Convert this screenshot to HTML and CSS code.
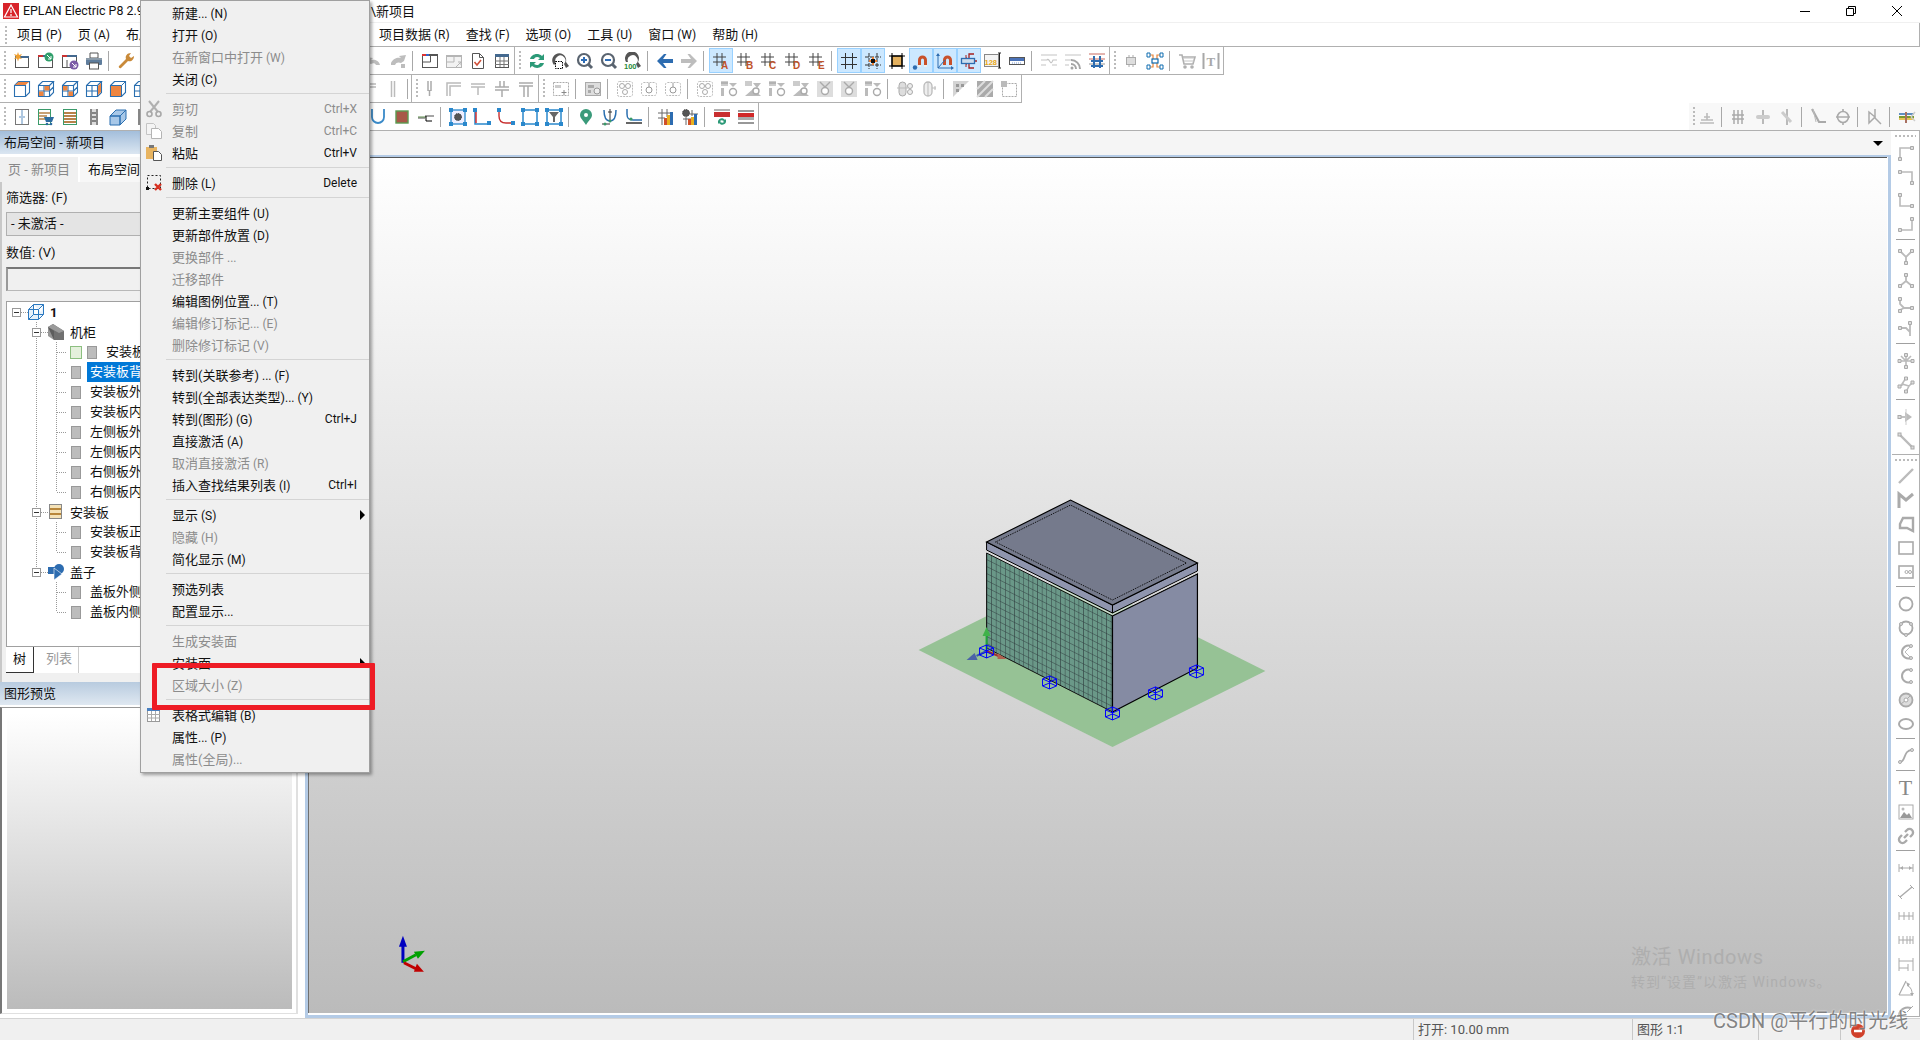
FILE: index.html
```html
<!DOCTYPE html>
<html lang="zh-CN">
<head>
    <meta charset="UTF-8">
    <title>EPLAN Electric P8 2.9</title>
    <link rel="stylesheet" href="styles.css">
</head>
<body>
<svg class="defs" width="0" height="0">
    <defs>
        <!-- main toolbar -->
        <symbol id="i-new" viewBox="0 0 18 18"><rect x="2.500" y="4.500" width="13" height="11" fill="#fff" stroke="#555"/><path d="M2 4h14v2H2z" fill="#44698f"/><path d="M5 0l1 3 3-1-2 3 2 2-3-.5-1 3-1-3-3 .5 2-2-2-3 3 1z" fill="#f0a030"/></symbol>
        <symbol id="i-open" viewBox="0 0 18 18"><rect x="1.500" y="3.500" width="14" height="12" fill="#fff" stroke="#555"/><path d="M1 3h5v2H1z" fill="#c33"/><path d="M6 3h10v2H6z" fill="#44698f"/><path d="M9 8V3" stroke="#555"/><circle cx="12" cy="5" r="4.500" fill="#2f9e6a"/><path d="M10 3l4 4m0-3v3h-3" stroke="#fff" fill="none"/></symbol>
        <symbol id="i-link" viewBox="0 0 18 18"><rect x="1.500" y="3.500" width="14" height="12" fill="#fff" stroke="#555"/><path d="M1 3h5v2H1z" fill="#c33"/><path d="M6 3h10v2H6z" fill="#44698f"/><path d="M6 8v7" stroke="#555"/><circle cx="13" cy="13" r="4.500" fill="#7b5aa6"/><path d="M11 11l4 4m0-3v3h-3" stroke="#fff" fill="none"/></symbol>
        <symbol id="i-print" viewBox="0 0 18 18"><path d="M5 1h8v5H5z" fill="#fff" stroke="#555"/><rect x="1" y="6" width="16" height="7" rx="1" fill="#5f7d9c"/><path d="M1 6h16v2H1z" fill="#8a9aa8"/><rect x="4.500" y="11" width="9" height="6" fill="#fff" stroke="#555"/></symbol>
        <symbol id="i-wrench" viewBox="0 0 18 18"><path d="M2 14l7-7c-1-3 1-6 5-6l-2 3 2 2 3-2c0 4-3 6-6 5l-7 7c-1 1-3-1-2-2z" fill="#c98a3a"/></symbol>
        <symbol id="i-undo" viewBox="0 0 18 18"><path d="M3 11l-2-6 7 1-2 2c3-1 8 0 9 5h-4c-1-2-3-2-5-1z" fill="#bdbdbd"/></symbol>
        <symbol id="i-redo" viewBox="0 0 18 18"><path d="M15 9l2-6-7 1 2 2c-3-1-8 0-10 5v2h4c1-3 4-3 6-2z" fill="#bdbdbd"/><rect x="12" y="12" width="4" height="4" fill="#bdbdbd"/></symbol>
        <symbol id="i-layout" viewBox="0 0 18 18"><rect x="1.500" y="2.500" width="15" height="13" fill="#fff" stroke="#555"/><path d="M1 2h15v2H1z" fill="#555"/><path d="M1 2h4v2H1z" fill="#d33"/><path d="M5 2h3v2H5z" fill="#36c"/><path d="M9.500 4v6h-8" fill="none" stroke="#555"/></symbol>
        <symbol id="i-layout-g" viewBox="0 0 18 18"><rect x="1.500" y="3.500" width="15" height="12" fill="#f2f2f2" stroke="#b5b5b5"/><path d="M1 3h16v2H1z" fill="#b5b5b5"/><path d="M9 5v5H2m9 5l5-5m-3 0h3v3" fill="none" stroke="#b5b5b5"/></symbol>
        <symbol id="i-check" viewBox="0 0 18 18"><path d="M3.500 1.500h7l4 4v11h-11z" fill="#fff" stroke="#555"/><path d="M10.500 1.500v4h4" fill="none" stroke="#555"/><path d="M5.500 10l2.500 3 4-5" fill="none" stroke="#d0503a" stroke-width="1.600"/></symbol>
        <symbol id="i-table" viewBox="0 0 18 18"><rect x="2.500" y="2.500" width="13" height="13" fill="#fff" stroke="#555"/><path d="M2 2h14v3H2z" fill="#44698f"/><path d="M2 9h14M2 12.500h14M7 5v10M11 5v10" stroke="#777"/></symbol>
        <symbol id="i-refresh" viewBox="0 0 18 18"><path d="M2 7c1-4 7-7 12-3l2-2v6h-6l2-2c-3-2-5-1-6 1zM16 11c-1 4-7 7-12 3l-2 2v-6h6l-2 2c3 2 5 1 6-1z" fill="#2c9a78"/></symbol>
        <symbol id="i-zwin" viewBox="0 0 18 18"><path d="M2 13A7 7 0 1 1 14 10l3 4-3 2-2-4A5 5 0 1 0 4 11" fill="#555"/><rect x="3.500" y="9.500" width="7" height="7" fill="#fff" stroke="#000" stroke-dasharray="1.500 1"/></symbol>
        <symbol id="i-zin" viewBox="0 0 18 18"><circle cx="8" cy="8" r="6" fill="#fff" stroke="#5a6470" stroke-width="2.200"/><path d="M12 12l4 4" stroke="#5a6470" stroke-width="3"/><path d="M5 8h6M8 5v6" stroke="#2f6db5" stroke-width="2"/></symbol>
        <symbol id="i-zout" viewBox="0 0 18 18"><circle cx="8" cy="8" r="6" fill="#fff" stroke="#5a6470" stroke-width="2.200"/><path d="M12 12l4 4" stroke="#5a6470" stroke-width="3"/><path d="M5 8h6" stroke="#2f6db5" stroke-width="2"/></symbol>
        <symbol id="i-z100" viewBox="0 0 18 18"><path d="M2 10A7 7 0 1 1 14 10l3 4-3 2-2-4A5 5 0 1 0 4 10" fill="#555"/><text x="0" y="17" font-size="7.500" font-weight="700" fill="#2a8a3a" font-family="Liberation Sans, sans-serif">100</text></symbol>
        <symbol id="i-back" viewBox="0 0 18 18"><path d="M1 9l7-7h2.500L7 7h10v4H7l3.500 5H8z" fill="#2d6cb0"/></symbol>
        <symbol id="i-fwd" viewBox="0 0 18 18"><path d="M17 9l-7-7H7.500L11 7H1v4h10l-3.500 5H10z" fill="#bdbdbd"/></symbol>
        <symbol id="i-hash" viewBox="0 0 18 18"><path d="M5 1v13M10 1v13M1 5h13M1 10h13" stroke="#444" fill="none"/></symbol>
        <symbol id="i-grid" viewBox="0 0 18 18"><path d="M5.500 1v16M12.500 1v16M1 5.500h16M1 12.500h16" stroke="#333" fill="none"/></symbol>
        <symbol id="i-snap" viewBox="0 0 18 18"><path d="M5 1v16M13 1v16M1 5h16M1 13h16" stroke="#333" stroke-dasharray="4 1"/><path d="M5 9h8M9 5v8" stroke="#f08030" stroke-width="2"/><rect x="7" y="7" width="4" height="4" fill="#111"/></symbol>
        <symbol id="i-orsq" viewBox="0 0 18 18"><rect x="4" y="4" width="10" height="10" fill="#e3b05e" stroke="#000" stroke-width="1.200"/><path d="M4 1v16M14 1v16M1 4h16M1 14h16" stroke="#000"/></symbol>
        <symbol id="i-mag" viewBox="0 0 18 18"><path d="M6 15V8a4.500 4.500 0 0 1 9 0v7h-3V8a1.500 1.500 0 0 0-3 0v7z" fill="#c8502a"/><path d="M6 15h3v-2H6zM12 15h3v-2h-3z" fill="#eee"/><circle cx="3" cy="15.500" r="2.200" fill="#2d6cb0"/></symbol>
        <symbol id="i-magax" viewBox="0 0 18 18"><path d="M7 13V8a4.500 4.500 0 0 1 9 0v5h-3V8a1.500 1.500 0 0 0-3 0v5z" fill="#c8502a"/><path d="M2 2v14h15M2 16L9 8" fill="none" stroke="#2d6cb0"/><path d="M0 4l2-3 2 3zM15 14l3 2-3 2z" fill="#2d6cb0"/></symbol>
        <symbol id="i-conn" viewBox="0 0 18 18"><path d="M9 6V2h5M9 12v4h5M3 9H1M15 9h2" fill="none" stroke="#a52020" stroke-width="1.300"/><path d="M7 6h-1v-3M7 12h-1v3" fill="none" stroke="#a52020"/><rect x="1.500" y="6.500" width="13" height="5" fill="#cde" stroke="#2d6cb0" stroke-width="1.300"/></symbol>
        <symbol id="i-128" viewBox="0 0 18 18"><rect x="0.500" y="2.500" width="14" height="12" fill="#f4f4f4" stroke="#888"/><text x="0.500" y="12.500" font-size="7.500" font-weight="700" fill="#e8a818" font-family="Liberation Sans, sans-serif">128</text><path d="M14 1h3M15.500 1v15M14 16h3" stroke="#222"/></symbol>
        <symbol id="i-bar" viewBox="0 0 18 18"><rect x="1.500" y="5.500" width="15" height="7" fill="#fff" stroke="#555"/><rect x="2" y="6" width="14" height="3" fill="#4a72b8"/><path d="M4 11h10" stroke="#7b9bd0" stroke-dasharray="1 1"/></symbol>
        <symbol id="i-gwave" viewBox="0 0 18 18"><path d="M1 3h16M1 8h6c2-3 3 5 5 2l1-2h4M1 13h5M12 13h5" fill="none" stroke="#c4c4c4" stroke-width="1.200"/></symbol>
        <symbol id="i-grss" viewBox="0 0 18 18"><path d="M1 3h16M1 8h7M1 13h4" stroke="#c4c4c4" stroke-width="1.200"/><path d="M7 8a9 9 0 0 1 9 9M7 12a5 5 0 0 1 5 5" fill="none" stroke="#a4a4a4" stroke-width="2"/><circle cx="8" cy="16" r="1.500" fill="#a4a4a4"/></symbol>
        <symbol id="i-gnet" viewBox="0 0 18 18"><path d="M1 2h16M1 7h16" stroke="#c86a60"/><path d="M1 12h16" stroke="#999"/><path d="M6 4v12M12 4v12M3 9h12M3 14h12" stroke="#2d6cb0" stroke-width="2"/></symbol>
        <symbol id="i-chip" viewBox="0 0 18 18"><rect x="4.500" y="5.500" width="9" height="7" fill="#ddd" stroke="#aaa"/><path d="M7 3v2M11 3v2M7 13v2M11 13v2" stroke="#aaa"/></symbol>
        <symbol id="i-cblue" viewBox="0 0 18 18"><path d="M3 3h4v5h4V3h4M3 15h4v-5h4v5h4" fill="none" stroke="#e8853a" stroke-width="1.200"/><path d="M1 1h3v4H1zM14 1h3v4h-3zM1 13h3v4H1zM14 13h3v4h-3z" fill="#fff" stroke="#0f6cb0"/><rect x="6" y="7" width="6" height="4" fill="#fff" stroke="#0f6cb0" stroke-width="1.200"/></symbol>
        <symbol id="i-cart" viewBox="0 0 18 18"><path d="M1 3h3l2 9h9l2-7H5" fill="none" stroke="#b0b0b0" stroke-width="1.600"/><path d="M5 6h11M6 9h10" stroke="#c4c4c4"/><circle cx="7" cy="15" r="1.800" fill="#b0b0b0"/><circle cx="14" cy="15" r="1.800" fill="#b0b0b0"/></symbol>
        <symbol id="i-tbar" viewBox="0 0 18 18"><path d="M1.500 1v16M16.500 1v16" stroke="#a8a8a8" stroke-width="2"/><text x="4.500" y="14" font-size="13" font-weight="700" fill="#a8a8a8" font-family="Liberation Serif, serif">T</text></symbol>
        <!-- second row -->
        <symbol id="i-cube" viewBox="0 0 18 18"><path d="M1.500 5.500h11v11h-11zM1.500 5.500l4-4h11l-4 4M12.500 16.500l4-4v-11M7 6v10M1.500 11h11M12.500 11l4-4" fill="#fff" stroke="#2a6fb0" stroke-width="1.100"/></symbol>
        <symbol id="c-top" viewBox="0 0 18 18"><path d="M1.500 16.500v-11l4-4h11v11l-4 4zM1.500 5.500h11v11" fill="#fff" stroke="#2a6fb0" stroke-width="1.100"/><path d="M2 5l3.500-3H16l-3.500 3z" fill="#ee8540"/></symbol>
        <symbol id="c-back" viewBox="0 0 18 18"><use href="#i-cube"/><path d="M7.500 6h5v4.500h-5z" fill="#ee8540"/><path d="M2 11.500h4.500V16H2z" fill="#ee8540"/></symbol>
        <symbol id="c-left" viewBox="0 0 18 18"><use href="#i-cube"/><path d="M2 6h4.500v4.500H2zM7.500 11.500h4.500V16H7.500z" fill="#ee8540"/></symbol>
        <symbol id="c-right" viewBox="0 0 18 18"><use href="#i-cube"/><path d="M13 6l3-3v9l-3 3z" fill="#ee8540"/></symbol>
        <symbol id="c-front" viewBox="0 0 18 18"><path d="M1.500 5.500l4-4h11v11l-4 4h-11z" fill="#fff" stroke="#2a6fb0" stroke-width="1.100"/><path d="M2 6h10v10H2z" fill="#ee8540"/><path d="M12.500 5.500l4-4M12.500 5.500v11M1.500 5.500h11" stroke="#2a6fb0"/></symbol>
        <symbol id="i-tline" viewBox="0 0 18 18"><path d="M2 4h14M2 7h14M9 7v8" fill="none" stroke="#bbb" stroke-width="1.500"/></symbol>
        <symbol id="i-pipe" viewBox="0 0 18 18"><path d="M7.500 1v16M10.500 1v16" stroke="#bbb" stroke-width="1.500"/></symbol>
        <symbol id="i-pipet" viewBox="0 0 18 18"><path d="M7 1v10M10 1v10M8.500 10v6" fill="none" stroke="#aaa" stroke-width="1.500"/></symbol>
        <symbol id="i-corner" viewBox="0 0 18 18"><path d="M2 16V3h14M5 16V6h11" fill="none" stroke="#bbb" stroke-width="1.500"/></symbol>
        <symbol id="i-cross" viewBox="0 0 18 18"><path d="M2 7h14M2 10h14M7 1v6M11 1v6M9 10v7" fill="none" stroke="#aaa" stroke-width="1.500"/></symbol>
        <symbol id="i-tee" viewBox="0 0 18 18"><path d="M2 3h14M2 6h14M7 6v11M11 6v11" fill="none" stroke="#aaa" stroke-width="1.500"/></symbol>
        <symbol id="i-addbox" viewBox="0 0 18 18"><rect x="1.500" y="2.500" width="15" height="13" fill="none" stroke="#aaa" stroke-dasharray="2 1"/><path d="M3 5h6v3H3z" fill="#ccc"/><path d="M12 10v5M9.500 12.500h5" stroke="#888"/></symbol>
        <symbol id="i-pal" viewBox="0 0 18 18"><rect x="1.500" y="2.500" width="15" height="13" fill="#ddd" stroke="#aaa"/><path d="M4 5h6v3H4zM4 10h3v3H4z" fill="#aaa"/><circle cx="13" cy="11" r="3" fill="#eee" stroke="#999"/></symbol>
        <symbol id="i-nodes" viewBox="0 0 18 18"><rect x="1.500" y="1.500" width="15" height="15" rx="2" fill="none" stroke="#bbb" stroke-dasharray="2 1"/><circle cx="6" cy="6" r="2.500" fill="none" stroke="#aaa"/><circle cx="12" cy="6" r="2.500" fill="none" stroke="#aaa"/><circle cx="9" cy="12" r="2.500" fill="none" stroke="#aaa"/></symbol>
        <symbol id="i-node1" viewBox="0 0 18 18"><rect x="1.500" y="2.500" width="15" height="13" rx="2" fill="none" stroke="#bbb" stroke-dasharray="2 1"/><circle cx="9" cy="10" r="3" fill="none" stroke="#999"/><path d="M9 3v4" stroke="#999"/></symbol>
        <symbol id="i-filt" viewBox="0 0 18 18"><path d="M1 1h7v5H1z" fill="#ccc"/><path d="M1 3h7" stroke="#999"/><path d="M9 3h8l-4 4z" fill="#bbb"/><circle cx="13" cy="12" r="3.500" fill="#fff" stroke="#aaa" stroke-width="1.400"/><path d="M1 8h3v8H1z" fill="#bbb"/></symbol>
        <symbol id="i-hour" viewBox="0 0 18 18"><path d="M1 1h7v5H1z" fill="#ccc"/><path d="M9 3h8l-4 5-4-5z" fill="#bbb"/><path d="M1 16h16l-8-7z" fill="#bbb"/><circle cx="12" cy="11" r="3" fill="#fff" stroke="#aaa" stroke-width="1.400"/></symbol>
        <symbol id="i-tile" viewBox="0 0 18 18"><rect x="1" y="1" width="16" height="16" fill="#ddd"/><path d="M4 2l5 5 5-5" fill="none" stroke="#aaa" stroke-width="1.400"/><circle cx="9" cy="11" r="3.500" fill="#fff" stroke="#aaa" stroke-width="1.400"/></symbol>
        <symbol id="i-ovals" viewBox="0 0 18 18"><rect x="3" y="2" width="7" height="14" rx="3.500" fill="#ddd" stroke="#aaa"/><path d="M1 8h11" stroke="#bbb"/><circle cx="14" cy="6" r="2.500" fill="#eee" stroke="#aaa"/><circle cx="14" cy="12" r="2.500" fill="#eee" stroke="#aaa"/></symbol>
        <symbol id="i-oval" viewBox="0 0 18 18"><rect x="4" y="2" width="8" height="14" rx="4" fill="#eee" stroke="#bbb" stroke-width="1.300"/><path d="M8 2v14M12 8h4M15 6v4" stroke="#bbb"/></symbol>
        <symbol id="i-tri" viewBox="0 0 18 18"><path d="M1 1h16L1 17z" fill="#d4d4d4"/><path d="M4 4h3v3H4zM9 4h3v3H9zM4 9h3v3H4z" fill="#999"/></symbol>
        <symbol id="i-hatch" viewBox="0 0 18 18"><rect x="1" y="1" width="16" height="16" fill="#aaa"/><path d="M1 9l8-8M1 17L17 1M9 17l8-8" stroke="#ddd" stroke-width="2"/></symbol>
        <symbol id="i-dash" viewBox="0 0 18 18"><rect x="2.500" y="3.500" width="14" height="13" fill="none" stroke="#aaa" stroke-dasharray="2 1"/><path d="M1 1h6v6H1z" fill="#bbb"/></symbol>
        <!-- third row -->
        <symbol id="i-door" viewBox="0 0 18 18"><rect x="2.500" y="1.500" width="13" height="15" fill="#fff" stroke="#777"/><path d="M9 2v14M7 8v2M11 8v2" stroke="#5f8fc0"/></symbol>
        <symbol id="i-lcart" viewBox="0 0 18 18"><rect x="1.500" y="1.500" width="12" height="15" fill="#fff" stroke="#3a9a6a"/><path d="M2 5h11M2 8h8M2 11h7" stroke="#b8824a" stroke-width="1.500"/><path d="M7 9h10l-2 5H9z" fill="#2d6ca0"/><circle cx="10" cy="16" r="1.300" fill="#2d6ca0"/><circle cx="14" cy="16" r="1.300" fill="#2d6ca0"/></symbol>
        <symbol id="i-list" viewBox="0 0 18 18"><rect x="2.500" y="1.500" width="13" height="15" fill="#fff" stroke="#3a9a6a"/><path d="M3 5h12M3 8h12M3 11h12M3 14h12" stroke="#b8824a" stroke-width="2"/></symbol>
        <symbol id="i-rail" viewBox="0 0 18 18"><path d="M5 1h8v16H5z" fill="#888"/><path d="M7 1h4v16H7z" fill="#ddd"/><path d="M7 5h4M7 9h4M7 13h4" stroke="#666" stroke-width="1.500"/></symbol>
        <symbol id="i-block" viewBox="0 0 18 18"><path d="M1 8l6-6h10L11 8zM1 8h10v9H1zM11 8l6-6v9l-6 6z" fill="#a8c8e8" stroke="#2a6fb0"/></symbol>
        <symbol id="i-u" viewBox="0 0 18 18"><path d="M3 1v8a6 6 0 0 0 12 0V1" fill="none" stroke="#3a8ac8" stroke-width="1.800"/></symbol>
        <symbol id="i-brsq" viewBox="0 0 18 18"><rect x="3" y="3" width="12" height="12" fill="#a85848" stroke="#5a9a50" stroke-width="1.400"/></symbol>
        <symbol id="i-wire" viewBox="0 0 18 18"><path d="M1 10h7M8 8h9" stroke="#888" stroke-width="1.500"/><path d="M1 9h8" stroke="#5a8a4a"/><path d="M9 8v5h6" fill="none" stroke="#000"/></symbol>
        <symbol id="i-bxgear" viewBox="0 0 18 18"><rect x="2" y="2" width="14" height="14" fill="#eef" stroke="#2a88cc" stroke-width="1.300"/><circle cx="9" cy="9" r="3.500" fill="#555" stroke="#333" stroke-dasharray="1 1"/><path d="M0 0h4v4H0zM14 0h4v4h-4zM0 14h4v4H0zM14 14h4v4h-4z" fill="#2a88cc"/></symbol>
        <symbol id="i-lblue" viewBox="0 0 18 18"><path d="M2 2v14h14" fill="none" stroke="#2a88cc" stroke-width="1.500"/><path d="M3 2v13" stroke="#d03030" stroke-width="1.500"/><path d="M0 0h4v4H0zM14 13h4v4h-4z" fill="#2a88cc"/></symbol>
        <symbol id="i-lred" viewBox="0 0 18 18"><path d="M2 3v5c0 5 3 7 7 7h6" fill="none" stroke="#c83030" stroke-width="1.400"/><path d="M0 0h4v4H0zM14 13h4v4h-4z" fill="#2a88cc"/></symbol>
        <symbol id="i-qblue" viewBox="0 0 18 18"><rect x="2" y="2" width="14" height="14" fill="#fff" stroke="#2a88cc" stroke-width="1.500"/><path d="M0 0h4v4H0zM14 0h4v4h-4zM0 14h4v4H0zM14 14h4v4h-4z" fill="#2a88cc"/></symbol>
        <symbol id="i-qfunnel" viewBox="0 0 18 18"><rect x="2" y="2" width="14" height="14" fill="#fff" stroke="#2a88cc" stroke-width="1.500"/><path d="M4 4h10l-4 5v5H8V9z" fill="#666"/><path d="M0 0h4v4H0zM14 0h4v4h-4zM0 14h4v4H0zM14 14h4v4h-4z" fill="#2a88cc"/></symbol>
        <symbol id="i-pin" viewBox="0 0 18 18"><path d="M9 17C6 12 3 10 3 7a6 6 0 0 1 12 0c0 3-3 5-6 10z" fill="#3a9a7a"/><circle cx="9" cy="7" r="2" fill="#fff"/></symbol>
        <symbol id="i-vnode" viewBox="0 0 18 18"><path d="M3 2c0 7 2 11 6 11s6-4 6-11" fill="none" stroke="#2a6fb0" stroke-width="1.500"/><path d="M9 1v12M7 4h4M1 16h8" stroke="#333"/><circle cx="4" cy="16" r="1.500" fill="#3a9a6a"/><circle cx="9" cy="13" r="1.500" fill="#3a9a6a"/></symbol>
        <symbol id="i-lgreen" viewBox="0 0 18 18"><path d="M2 1v5c0 5 2 6 6 6h9" fill="none" stroke="#2a6fb0" stroke-width="1.500"/><path d="M1 15h16" stroke="#333" stroke-width="1.500"/><circle cx="6" cy="11" r="1.600" fill="#3a9a6a"/></symbol>
        <symbol id="i-gbars" viewBox="0 0 18 18"><path d="M5 1v16M10 1v8M1 5h12M1 10h7" stroke="#666" fill="none"/><path d="M7 10h3v7H7z" fill="#d0502a"/><path d="M10 7h3v10h-3z" fill="#e8b020"/><path d="M13 4h3v13h-3z" fill="#2d6cb0"/></symbol>
        <symbol id="i-gears" viewBox="0 0 18 18"><circle cx="5" cy="5" r="3.500" fill="#555" stroke="#333" stroke-dasharray="1 1"/><path d="M2 11h8M5 9v8M11 2v6M8 6h9" stroke="#666" fill="none"/><path d="M7 11h3v6H7z" fill="#d0502a"/><path d="M10 9h3v8h-3z" fill="#e8b020"/><path d="M13 6h3v11h-3z" fill="#2d6cb0"/></symbol>
        <symbol id="i-rbar2" viewBox="0 0 18 18"><path d="M1 2h16" stroke="#666"/><path d="M1 4h16v5H1z" fill="#c83030"/><path d="M5 13c1-3 5-4 7-1l1-1v3h-3l1-1c-2-1-3-1-4 0zM13 14c-1 3-5 4-7 1l-1 1v-3h3l-1 1c2 1 3 1 4 0z" fill="#2c9a78"/></symbol>
        <symbol id="i-rbar" viewBox="0 0 18 18"><path d="M1 3h16M1 15h16" stroke="#777" stroke-width="1.500"/><path d="M1 5h16v4H1z" fill="#d02828"/><path d="M1 9h16v3H1z" fill="#aaa"/></symbol>
        <!-- third row, right -->
        <symbol id="i-hat" viewBox="0 0 18 18"><path d="M2 15h14M3 12h12M6 9h6M9 5v7" fill="none" stroke="#bbb" stroke-width="1.600"/></symbol>
        <symbol id="i-tri3" viewBox="0 0 18 18"><path d="M4 2v14M8 2v14M12 2v14M2 7h12M2 11h12" stroke="#aaa" stroke-width="1.500"/></symbol>
        <symbol id="i-oring" viewBox="0 0 18 18"><path d="M9 2v14" stroke="#aaa" stroke-width="1.600"/><rect x="2" y="7" width="14" height="4" rx="2" fill="#ccc"/></symbol>
        <symbol id="i-slash" viewBox="0 0 18 18"><path d="M9 1v16" stroke="#aaa" stroke-width="1.600"/><path d="M4 4l9 10" stroke="#ccc" stroke-width="3"/></symbol>
        <symbol id="i-ski" viewBox="0 0 18 18"><path d="M2 1l7 13h7" fill="none" stroke="#aaa" stroke-width="2.200"/><path d="M3 1l3 13" stroke="#bbb"/></symbol>
        <symbol id="i-theta" viewBox="0 0 18 18"><circle cx="9" cy="9" r="5.500" fill="none" stroke="#aaa" stroke-width="1.600"/><path d="M2 9h14M9 1v3M9 14v3" stroke="#aaa" stroke-width="1.600"/></symbol>
        <symbol id="i-kk" viewBox="0 0 18 18"><path d="M3 4v11l6-6zM9 1v9l6 6" fill="none" stroke="#aaa" stroke-width="1.500"/></symbol>
        <symbol id="i-wires" viewBox="0 0 18 18"><path d="M1 6h15" stroke="#2d6cb0" stroke-width="1.500"/><path d="M1 9h15" stroke="#7a9a30" stroke-width="2"/><path d="M1 11h15" stroke="#e0b020" stroke-width="1.500"/><path d="M8 4v11" stroke="#a87060" stroke-width="2"/><path d="M13 9l4-5M13 9l4 4" stroke="#ccc" stroke-width="1.500"/></symbol>
        <!-- side toolbar -->
        <symbol id="v-c1" viewBox="0 0 18 18"><path d="M3 15V4h12" fill="none" stroke="#bbb" stroke-width="1.600"/><path d="M1.500 13.500h3v3h-3zM13.500 2.500h3v3h-3z" fill="#ddd" stroke="#aaa"/></symbol>
        <symbol id="v-c2" viewBox="0 0 18 18"><path d="M3 4h12v11" fill="none" stroke="#bbb" stroke-width="1.600"/><path d="M1.500 2.500h3v3h-3zM13.500 13.500h3v3h-3z" fill="#ddd" stroke="#aaa"/></symbol>
        <symbol id="v-c3" viewBox="0 0 18 18"><path d="M3 3v11h12" fill="none" stroke="#bbb" stroke-width="1.600"/><path d="M1.500 1.500h3v3h-3zM13.500 12.500h3v3h-3z" fill="#ddd" stroke="#aaa"/></symbol>
        <symbol id="v-c4" viewBox="0 0 18 18"><path d="M3 14h12V3" fill="none" stroke="#bbb" stroke-width="1.600"/><path d="M1.500 12.500h3v3h-3zM13.500 1.500h3v3h-3z" fill="#ddd" stroke="#aaa"/></symbol>
        <symbol id="v-y1" viewBox="0 0 18 18"><path d="M3 3l6 6 6-6M9 9v6" fill="none" stroke="#bbb" stroke-width="1.800"/><path d="M1.500 1.500h3v3h-3zM13.500 1.500h3v3h-3zM7.500 13.500h3v3h-3z" fill="#ddd" stroke="#aaa"/></symbol>
        <symbol id="v-y2" viewBox="0 0 18 18"><path d="M9 3v6l6 5M9 9l-6 5" fill="none" stroke="#bbb" stroke-width="1.800"/><path d="M7.500 1.500h3v3h-3zM1.500 12.500h3v3h-3zM13.500 12.500h3v3h-3z" fill="#ddd" stroke="#aaa"/></symbol>
        <symbol id="v-y3" viewBox="0 0 18 18"><path d="M3 3v5l4 4h8M3 14l4-2" fill="none" stroke="#bbb" stroke-width="1.800"/><path d="M1.500 1.500h3v3h-3zM13.500 10.500h3v3h-3zM1.500 13.500h3v3h-3z" fill="#ddd" stroke="#aaa"/></symbol>
        <symbol id="v-y4" viewBox="0 0 18 18"><path d="M3 8h6l4 4V4M13 12v4" fill="none" stroke="#bbb" stroke-width="1.800"/><path d="M1.500 6.500h3v3h-3zM11.500 1.500h3v3h-3z" fill="#ddd" stroke="#aaa"/></symbol>
        <symbol id="v-j1" viewBox="0 0 18 18"><path d="M9 3v12M2 9h14M4 4l5 5 5-5" fill="none" stroke="#bbb" stroke-width="1.600"/><path d="M7.500 1.500h3v3h-3zM7.500 13.500h3v3h-3zM1 7.500h3v3H1zM14 7.500h3v3h-3z" fill="#ddd" stroke="#aaa"/></symbol>
        <symbol id="v-j2" viewBox="0 0 18 18"><path d="M9 2l-4 6 7 2-3 6M3 10l4-2M12 10l3-3" fill="none" stroke="#bbb" stroke-width="1.600"/><path d="M7.500 1h3v3h-3zM7.500 14h3v3h-3zM1 9h3v3H1zM14 5h3v3h-3z" fill="#ddd" stroke="#aaa"/></symbol>
        <symbol id="v-arr" viewBox="0 0 18 18"><path d="M1 9h8" stroke="#bbb" stroke-width="1.800"/><path d="M8 4l7 5-7 5z" fill="#bbb"/><rect x="1" y="7.500" width="3" height="3" fill="#ddd" stroke="#aaa"/><path d="M9 1v16" stroke="#ccc"/></symbol>
        <symbol id="v-diag" viewBox="0 0 18 18"><path d="M3 3l12 12" stroke="#bbb" stroke-width="2.400"/><rect x="1" y="1" width="3" height="3" fill="#ddd" stroke="#aaa"/><rect x="14" y="14" width="3" height="3" fill="#ddd" stroke="#aaa"/></symbol>
        <symbol id="v-line" viewBox="0 0 18 18"><path d="M2 16L16 2" stroke="#bbb" stroke-width="2.400"/></symbol>
        <symbol id="v-poly" viewBox="0 0 18 18"><path d="M2 17V3l7 6 7-6" fill="none" stroke="#aaa" stroke-width="3"/></symbol>
        <symbol id="v-poly2" viewBox="0 0 18 18"><path d="M3 9l3-6h10v13l-6-3H3z" fill="none" stroke="#aaa" stroke-width="2.400"/></symbol>
        <symbol id="v-rect" viewBox="0 0 18 18"><rect x="2" y="3" width="14" height="12" fill="#fff" stroke="#aaa" stroke-width="1.600"/></symbol>
        <symbol id="v-rectn" viewBox="0 0 18 18"><rect x="2" y="3" width="14" height="12" fill="#fff" stroke="#aaa" stroke-width="1.600"/><circle cx="9.500" cy="9" r="1.500" fill="none" stroke="#aaa"/><circle cx="13" cy="9" r="1.500" fill="none" stroke="#aaa"/></symbol>
        <symbol id="v-circ" viewBox="0 0 18 18"><circle cx="9" cy="9" r="6.500" fill="#fff" stroke="#aaa" stroke-width="1.800"/></symbol>
        <symbol id="v-circn" viewBox="0 0 18 18"><circle cx="9" cy="9" r="6.500" fill="#fff" stroke="#aaa" stroke-width="1.800"/><circle cx="4" cy="5" r="1.500" fill="#ddd" stroke="#aaa"/><circle cx="14" cy="5" r="1.500" fill="#ddd" stroke="#aaa"/><circle cx="9" cy="16" r="1.500" fill="#ddd" stroke="#aaa"/></symbol>
        <symbol id="v-arc" viewBox="0 0 18 18"><path d="M14 3a6.500 6.500 0 1 0 0 12" fill="none" stroke="#aaa" stroke-width="2"/><path d="M14 3L8 9l6 6" fill="none" stroke="#bbb"/><circle cx="14" cy="3" r="1.500" fill="#ddd" stroke="#aaa"/><circle cx="14" cy="15" r="1.500" fill="#ddd" stroke="#aaa"/></symbol>
        <symbol id="v-arc2" viewBox="0 0 18 18"><path d="M14 3a6.500 6.500 0 1 0 0 12" fill="none" stroke="#aaa" stroke-width="2"/><circle cx="14" cy="3" r="1.500" fill="#ddd" stroke="#aaa"/><circle cx="14" cy="15" r="1.500" fill="#ddd" stroke="#aaa"/></symbol>
        <symbol id="v-pie" viewBox="0 0 18 18"><circle cx="9" cy="9" r="6.500" fill="#ddd" stroke="#aaa" stroke-width="1.800"/><path d="M9 9L14 4M9 9l-5 4" stroke="#aaa"/><circle cx="9" cy="9" r="2" fill="#fff" stroke="#aaa"/></symbol>
        <symbol id="v-ell" viewBox="0 0 18 18"><ellipse cx="9" cy="9" rx="7" ry="5" fill="#fff" stroke="#aaa" stroke-width="2"/></symbol>
        <symbol id="v-s" viewBox="0 0 18 18"><path d="M3 15c6 0 3-12 12-12" fill="none" stroke="#aaa" stroke-width="1.800"/><circle cx="3" cy="15" r="1.500" fill="#ddd" stroke="#aaa"/><circle cx="15" cy="3" r="1.500" fill="#ddd" stroke="#aaa"/></symbol>
        <symbol id="v-img" viewBox="0 0 18 18"><rect x="2" y="2" width="14" height="14" fill="#fff" stroke="#aaa"/><path d="M3 15l4-6 3 3 2-2 3 5z" fill="#999"/><circle cx="6" cy="6" r="1.500" fill="#bbb"/></symbol>
        <symbol id="v-link" viewBox="0 0 18 18"><path d="M7 11l4-4M5 8l-2 2a3 3 0 0 0 5 5l2-2M8 5l2-2a3 3 0 0 1 5 5l-2 2" fill="none" stroke="#aaa" stroke-width="2.400"/></symbol>
        <symbol id="v-dim" viewBox="0 0 18 18"><path d="M2 5v8M16 5v8M2 9h14" stroke="#aaa"/><path d="M3 9l3-2v4zM15 9l-3-2v4z" fill="#aaa"/></symbol>
        <symbol id="v-ddim" viewBox="0 0 18 18"><path d="M3 14L15 4" stroke="#aaa" stroke-width="1.400"/><path d="M1 12l4 4M13 2l4 4" stroke="#aaa"/></symbol>
        <symbol id="v-d3" viewBox="0 0 18 18"><path d="M2 5v8M7 5v8M12 5v8M16 5v8M2 9h14" stroke="#aaa"/></symbol>
        <symbol id="v-d4" viewBox="0 0 18 18"><path d="M2 5v8M6 5v8M10 5v8M13 5v8M16 5v8M2 9h14" stroke="#aaa"/></symbol>
        <symbol id="v-ds" viewBox="0 0 18 18"><path d="M2 3v13M16 3v13M11 9v7M2 6h14M2 13h9" stroke="#aaa"/></symbol>
        <symbol id="v-ang" viewBox="0 0 18 18"><path d="M2 16L9 2M2 16h14" fill="none" stroke="#aaa" stroke-width="1.200"/><path d="M10 6a10 10 0 0 1 5 10" fill="none" stroke="#aaa"/><path d="M9 3l4 2-2 3zM13 14h4l-2 3z" fill="#aaa"/></symbol>
        <symbol id="v-angd" viewBox="0 0 18 18"><path d="M2 12a9 9 0 0 1 12-7" fill="none" stroke="#aaa" stroke-width="2"/><path d="M10 9l6-6" stroke="#aaa"/></symbol>
        <!-- menu + tree -->
        <symbol id="m-cut" viewBox="0 0 18 18"><path d="M4 1l9 11M14 1L5 12" stroke="#b0b0b0" stroke-width="2"/><circle cx="4.500" cy="14" r="2.500" fill="none" stroke="#a8a8a8" stroke-width="1.600"/><circle cx="13.500" cy="14" r="2.500" fill="none" stroke="#a8a8a8" stroke-width="1.600"/></symbol>
        <symbol id="m-copy" viewBox="0 0 18 18"><path d="M1.500 1.500h7l2 2v9h-9z" fill="#f4f4f4" stroke="#c4c4c4"/><path d="M6.500 6.500h7l3 3v7h-10z" fill="#fff" stroke="#b4b4b4"/></symbol>
        <symbol id="m-paste" viewBox="0 0 18 18"><path d="M1 3h11v12H1z" fill="#e8b460"/><path d="M4 1h5v3H4z" fill="#777"/><path d="M8.500 7.500h5l3 3v6h-8z" fill="#fff" stroke="#555"/></symbol>
        <symbol id="m-del" viewBox="0 0 18 18"><rect x="2.500" y="1.500" width="13" height="13" fill="none" stroke="#222" stroke-dasharray="2 2"/><rect x="1" y="13" width="3" height="3" fill="#111"/><path d="M10 10l6 6M16 10l-6 6" stroke="#d83020" stroke-width="2.400"/></symbol>
        <symbol id="m-table" viewBox="0 0 18 18"><rect x="2.500" y="3.500" width="12" height="12" fill="#fff" stroke="#999"/><path d="M2 2h13v3H2z" fill="#4a80c0"/><path d="M2 8.500h13M2 12h13M6.500 5v10M10.500 5v10" stroke="#aaa"/></symbol>
        <symbol id="t-cube" viewBox="0 0 16 16"><path d="M.5 5.500h10v10H.5zM.5 5.500l5-5h10l-5 5M10.500 15.500l5-5V.5M5.500.5v10h10M.5 15.500l5-5" fill="#cfe3f6" fill-opacity=".5" stroke="#2a78c0"/></symbol>
        <symbol id="t-cab" viewBox="0 0 16 16"><path d="M0 3l5-3 11 7v9H6z" fill="#707070"/><path d="M0 3l5-3 11 7-5 2z" fill="#9a9a9a"/><path d="M0 3l6 4v9L0 12z" fill="#505050" opacity=".6"/></symbol>
        <symbol id="t-plate" viewBox="0 0 16 16"><rect x=".5" y=".5" width="12" height="14" transform="translate(1)" fill="#f4e2b8" stroke="#888"/><path d="M2 4h11v2H2zM2 9h11v2H2z" fill="#b8863a"/></symbol>
        <symbol id="t-cover" viewBox="0 0 16 16"><rect x="0" y="3" width="7" height="7" fill="#2d6cb0"/><circle cx="11" cy="5" r="5" fill="#2d6cb0"/><path d="M6 4l8 6-8 6z" fill="#2d6cb0" stroke="#fff" stroke-width=".6"/></symbol>
        <symbol id="i-logo" viewBox="0 0 16 16"><rect width="16" height="16" fill="#d8232a"/><path d="M8 2l6.500 12h-13z" fill="none" stroke="#fff" stroke-width="1.200"/><path d="M8 6v4M8 11v2" stroke="#fff" stroke-width="1.200"/></symbol>
    </defs>
</svg>

<div class="app">
    <header class="titlebar">
        <svg class="logo"><use href="#i-logo"/></svg>
        <div class="title-text">
            <span class="title-app">EPLAN Electric P8 2.9</span>
            <span class="title-path">项目\新项目</span>
        </div>
        <div class="win-btns">
            <button class="win-btn"><svg viewBox="0 0 10 10"><path d="M0 5.500h10" stroke="#000"/></svg></button>
            <button class="win-btn"><svg viewBox="0 0 10 10"><path d="M.5 2.500h7v7h-7zM2.500 2.500v-2h7v7h-2" fill="none" stroke="#000"/></svg></button>
            <button class="win-btn"><svg viewBox="0 0 10 10"><path d="M0 0l10 10M10 0L0 10" stroke="#000"/></svg></button>
        </div>
    </header>

    <nav class="menubar">
        <span class="grip-v"></span>
        <div class="menu-left">
            <span class="menu-item">项目<span class="k"> (P)</span></span>
            <span class="menu-item">页<span class="k"> (A)</span></span>
            <span class="menu-item">布局空间<span class="k"> (L)</span></span>
            <span class="menu-item">编辑<span class="k"> (E)</span></span>
            <span class="menu-item">视图<span class="k"> (V)</span></span>
        </div>
        <span class="menu-item">项目数据<span class="k"> (R)</span></span>
        <span class="menu-item">查找<span class="k"> (F)</span></span>
        <span class="menu-item">选项<span class="k"> (O)</span></span>
        <span class="menu-item">工具<span class="k"> (U)</span></span>
        <span class="menu-item">窗口<span class="k"> (W)</span></span>
        <span class="menu-item">帮助<span class="k"> (H)</span></span>
    </nav>

    <div class="toolrow">
        <div class="tb">
            <span class="grip"></span>
            <span class="ti"><svg><use href="#i-new"/></svg></span>
            <span class="ti"><svg><use href="#i-open"/></svg></span>
            <span class="ti"><svg><use href="#i-link"/></svg></span>
            <span class="ti"><svg><use href="#i-print"/></svg></span>
            <span class="tsep"></span>
            <span class="ti"><svg><use href="#i-wrench"/></svg></span>
            <span class="tb-fill fill-1"></span>
            <span class="ti"><svg><use href="#i-undo"/></svg></span>
            <span class="ti"><svg><use href="#i-redo"/></svg></span>
            <span class="tsep"></span>
            <span class="ti"><svg><use href="#i-layout"/></svg></span>
            <span class="ti"><svg><use href="#i-layout-g"/></svg></span>
            <span class="ti"><svg><use href="#i-check"/></svg></span>
            <span class="ti"><svg><use href="#i-table"/></svg></span>
        </div>
        <div class="tb">
            <span class="grip"></span>
            <span class="ti"><svg><use href="#i-refresh"/></svg></span>
            <span class="ti"><svg><use href="#i-zwin"/></svg></span>
            <span class="ti"><svg><use href="#i-zin"/></svg></span>
            <span class="ti"><svg><use href="#i-zout"/></svg></span>
            <span class="ti"><svg><use href="#i-z100"/></svg></span>
            <span class="tsep"></span>
            <span class="ti"><svg><use href="#i-back"/></svg></span>
            <span class="ti"><svg><use href="#i-fwd"/></svg></span>
            <span class="tsep"></span>
            <span class="ti on"><svg><use href="#i-hash"/><text class="gl" x="9" y="17">A</text></svg></span>
            <span class="ti"><svg><use href="#i-hash"/><text class="gl" x="10" y="17">B</text></svg></span>
            <span class="ti"><svg><use href="#i-hash"/><text class="gl" x="9" y="17">C</text></svg></span>
            <span class="ti"><svg><use href="#i-hash"/><text class="gl" x="9" y="17">D</text></svg></span>
            <span class="ti"><svg><use href="#i-hash"/><text class="gl" x="10" y="17">E</text></svg></span>
            <span class="tsep"></span>
            <span class="ti on"><svg><use href="#i-grid"/></svg></span>
            <span class="ti on"><svg><use href="#i-snap"/></svg></span>
            <span class="ti"><svg><use href="#i-orsq"/></svg></span>
            <span class="ti on"><svg><use href="#i-mag"/></svg></span>
            <span class="ti on"><svg><use href="#i-magax"/></svg></span>
            <span class="ti on"><svg><use href="#i-conn"/></svg></span>
            <span class="ti"><svg><use href="#i-128"/></svg></span>
            <span class="ti"><svg><use href="#i-bar"/></svg></span>
            <span class="tsep"></span>
            <span class="ti"><svg><use href="#i-gwave"/></svg></span>
            <span class="ti"><svg><use href="#i-grss"/></svg></span>
            <span class="ti"><svg><use href="#i-gnet"/></svg></span>
        </div>
        <div class="tb">
            <span class="grip grip-tight"></span>
            <span class="ti"><svg><use href="#i-chip"/></svg></span>
            <span class="ti"><svg><use href="#i-cblue"/></svg></span>
            <span class="tsep"></span>
            <span class="ti"><svg><use href="#i-cart"/></svg></span>
            <span class="ti"><svg><use href="#i-tbar"/></svg></span>
        </div>
    </div>

    <div class="toolrow">
        <div class="tb">
            <span class="grip"></span>
            <span class="ti"><svg><use href="#c-top"/></svg></span>
            <span class="ti"><svg><use href="#c-back"/></svg></span>
            <span class="ti"><svg><use href="#c-left"/></svg></span>
            <span class="ti"><svg><use href="#c-right"/></svg></span>
            <span class="ti"><svg><use href="#c-front"/></svg></span>
            <span class="ti"><svg><use href="#i-cube"/></svg></span>
            <span class="tb-fill fill-2"></span>
            <span class="ti"><svg><use href="#i-tline"/></svg></span>
            <span class="ti"><svg><use href="#i-pipe"/></svg></span>
            <span class="tsep tsep-end"></span>
        </div>
        <div class="tb">
            <span class="grip grip-small"></span>
            <span class="ti"><svg><use href="#i-pipet"/></svg></span>
            <span class="ti"><svg><use href="#i-corner"/></svg></span>
            <span class="ti"><svg><use href="#i-tline"/></svg></span>
            <span class="ti"><svg><use href="#i-cross"/></svg></span>
            <span class="ti"><svg><use href="#i-tee"/></svg></span>
        </div>
        <div class="tb">
            <span class="grip"></span>
            <span class="ti"><svg><use href="#i-addbox"/></svg></span>
            <span class="tsep"></span>
            <span class="ti"><svg><use href="#i-pal"/></svg></span>
            <span class="tsep"></span>
            <span class="ti"><svg><use href="#i-nodes"/></svg></span>
            <span class="ti"><svg><use href="#i-node1"/></svg></span>
            <span class="ti"><svg><use href="#i-node1"/></svg></span>
            <span class="tsep"></span>
            <span class="ti"><svg><use href="#i-nodes"/></svg></span>
            <span class="ti"><svg><use href="#i-filt"/></svg></span>
            <span class="ti"><svg><use href="#i-hour"/></svg></span>
            <span class="ti"><svg><use href="#i-filt"/></svg></span>
            <span class="ti"><svg><use href="#i-hour"/></svg></span>
            <span class="ti"><svg><use href="#i-tile"/></svg></span>
            <span class="ti"><svg><use href="#i-tile"/></svg></span>
            <span class="ti"><svg><use href="#i-filt"/></svg></span>
            <span class="tsep"></span>
            <span class="ti"><svg><use href="#i-ovals"/></svg></span>
            <span class="ti"><svg><use href="#i-oval"/></svg></span>
            <span class="tsep"></span>
            <span class="ti"><svg><use href="#i-tri"/></svg></span>
            <span class="ti"><svg><use href="#i-hatch"/></svg></span>
            <span class="ti"><svg><use href="#i-dash"/></svg></span>
        </div>
    </div>

    <div class="toolrow last-row">
        <div class="tb">
            <span class="grip"></span>
            <span class="ti"><svg><use href="#i-door"/></svg></span>
            <span class="ti"><svg><use href="#i-lcart"/></svg></span>
            <span class="ti"><svg><use href="#i-list"/></svg></span>
            <span class="ti"><svg><use href="#i-rail"/></svg></span>
            <span class="ti"><svg><use href="#i-block"/></svg></span>
            <span class="ti"><svg><use href="#i-rail"/></svg></span>
            <span class="tb-fill fill-3"></span>
            <span class="ti"><svg><use href="#i-u"/></svg></span>
            <span class="ti"><svg><use href="#i-brsq"/></svg></span>
            <span class="ti"><svg><use href="#i-wire"/></svg></span>
            <span class="tsep"></span>
            <span class="ti"><svg><use href="#i-bxgear"/></svg></span>
            <span class="ti"><svg><use href="#i-lblue"/></svg></span>
            <span class="ti"><svg><use href="#i-lred"/></svg></span>
            <span class="ti"><svg><use href="#i-qblue"/></svg></span>
            <span class="ti"><svg><use href="#i-qfunnel"/></svg></span>
            <span class="tsep"></span>
            <span class="ti"><svg><use href="#i-pin"/></svg></span>
            <span class="ti"><svg><use href="#i-vnode"/></svg></span>
            <span class="ti"><svg><use href="#i-lgreen"/></svg></span>
            <span class="tsep"></span>
            <span class="ti"><svg><use href="#i-gbars"/></svg></span>
            <span class="ti"><svg><use href="#i-gears"/></svg></span>
            <span class="tsep"></span>
            <span class="ti"><svg><use href="#i-rbar2"/></svg></span>
            <span class="ti"><svg><use href="#i-rbar"/></svg></span>
        </div>
        <div class="tb tb-right">
            <span class="grip grip-small"></span>
            <span class="ti"><svg><use href="#i-hat"/></svg></span>
            <span class="tsep"></span>
            <span class="ti"><svg><use href="#i-tri3"/></svg></span>
            <span class="ti"><svg><use href="#i-oring"/></svg></span>
            <span class="ti"><svg><use href="#i-slash"/></svg></span>
            <span class="tsep"></span>
            <span class="ti"><svg><use href="#i-ski"/></svg></span>
            <span class="ti"><svg><use href="#i-theta"/></svg></span>
            <span class="tsep"></span>
            <span class="ti"><svg><use href="#i-kk"/></svg></span>
            <span class="tsep"></span>
            <span class="ti"><svg><use href="#i-wires"/></svg></span>
        </div>
    </div>

    <div class="workspace">
        <aside class="side">
            <div class="panel-head">布局空间 - 新项目</div>
            <div class="side-tabs">
                <span class="side-tab">页 - 新项目</span>
                <span class="side-tab active">布局空间 - 新项目</span>
            </div>
            <div class="nav-body">
                <label class="field-label">筛选器: (F)</label>
                <div class="select-box">- 未激活 -</div>
                <label class="field-label field-two">数值: (V)</label>
                <div class="input-box"></div>
                <div class="tree">
                    <div class="tree-row root"><span class="exp"></span><span class="dash"></span><svg class="t-ic"><use href="#t-cube"/></svg><b>1</b></div>
                    <div class="lvl1">
                        <div class="tree-row"><span class="exp"></span><span class="dash"></span><svg class="t-ic"><use href="#t-cab"/></svg><span class="t-name">机柜</span></div>
                        <div class="kids">
                            <div class="leaf"><span class="leaf-green"></span><span class="leaf-box"></span><span class="leaf-text first-text">安装板正面</span></div>
                            <div class="leaf"><span class="leaf-box"></span><span class="leaf-text sel">安装板背面</span></div>
                            <div class="leaf"><span class="leaf-box"></span><span class="leaf-text">安装板外侧</span></div>
                            <div class="leaf"><span class="leaf-box"></span><span class="leaf-text">安装板内侧</span></div>
                            <div class="leaf"><span class="leaf-box"></span><span class="leaf-text">左侧板外侧</span></div>
                            <div class="leaf"><span class="leaf-box"></span><span class="leaf-text">左侧板内侧</span></div>
                            <div class="leaf"><span class="leaf-box"></span><span class="leaf-text">右侧板外侧</span></div>
                            <div class="leaf"><span class="leaf-box"></span><span class="leaf-text">右侧板内侧</span></div>
                        </div>
                        <div class="tree-row"><span class="exp"></span><span class="dash"></span><svg class="t-ic"><use href="#t-plate"/></svg><span class="t-name">安装板</span></div>
                        <div class="kids">
                            <div class="leaf"><span class="leaf-box"></span><span class="leaf-text">安装板正面</span></div>
                            <div class="leaf"><span class="leaf-box"></span><span class="leaf-text">安装板背面</span></div>
                        </div>
                        <div class="tree-row"><span class="exp"></span><span class="dash"></span><svg class="t-ic"><use href="#t-cover"/></svg><span class="t-name">盖子</span></div>
                        <div class="kids">
                            <div class="leaf"><span class="leaf-box"></span><span class="leaf-text">盖板外侧</span></div>
                            <div class="leaf"><span class="leaf-box"></span><span class="leaf-text">盖板内侧</span></div>
                        </div>
                    </div>
                </div>
                <div class="tree-tabs">
                    <span class="tree-tab active">树</span>
                    <span class="tree-tab">列表</span>
                </div>
            </div>
            <div class="panel-head preview-head">图形预览</div>
            <div class="preview"><div class="preview-view"></div></div>
        </aside>

        <main class="view">
            <div class="view-strip"><span class="strip-arrow"></span></div>
            <div class="view-frame">
                <div class="canvas">
                    <svg class="scene" viewBox="309 158 1579 855">
                        <defs>
                            <pattern id="mesh" width="4.6" height="7" patternUnits="userSpaceOnUse" patternTransform="translate(987 552) skewY(26.57)">
                                <rect width="4.6" height="7" fill="#6a9888"/>
                                <path d="M0 0h4.6M0 0v7" stroke="#2f3d3f" stroke-width="1"/>
                            </pattern>
                            <g id="foot" fill="none" stroke="#0000ff" stroke-width="1">
                                <path d="M-7-3l7-3 7 3v7l-7 3-7-3zM-7-3l7 3 7-3M0 0v7M-7 4l7-3 7 3M0-6v7"/>
                            </g>
                        </defs>
                        <path d="M919 650L1072 574 1266 671 1113 747z" fill="#96c295"/>
                        <path d="M987 553L1113 616V712L987 648z" fill="url(#mesh)" stroke="#111"/>
                        <path d="M1113 616L1198 574V668L1113 712z" fill="#858ba3" stroke="#000" stroke-width="1.200"/>
                        <path d="M987 542V550L1113 613V605z" fill="#8f95ae" stroke="#000"/>
                        <path d="M1113 605V613L1198 571V563z" fill="#8f95ae" stroke="#000"/>
                        <path d="M987 551.500l126 63 85-42" fill="none" stroke="#d8d8d8"/>
                        <path d="M987 542L1071 500 1198 563 1113 605z" fill="#757a8c" stroke="#000" stroke-width="1.200"/>
                        <path d="M996 542L1071 505 1187 563 1113 600z" fill="none" stroke="#000" stroke-dasharray="1 1"/>
                        <path d="M987 650V632" stroke="#1fa53a" stroke-width="2"/>
                        <path d="M983 636l4-9 4 9z" fill="#3fb24a"/>
                        <path d="M987 651l-10 5" stroke="#3355b0" stroke-width="2"/>
                        <path d="M967 660l8-7 3 7z" fill="#4a62a8"/>
                        <path d="M987 651l12 5" stroke="#a03030" stroke-width="2"/>
                        <path d="M998 653l9 6-9 0z" fill="#b06050"/>
                        <use href="#foot" x="987" y="651"/>
                        <use href="#foot" x="1050" y="682"/>
                        <use href="#foot" x="1113" y="713"/>
                        <use href="#foot" x="1156" y="693"/>
                        <use href="#foot" x="1197" y="671"/>
                        <!-- axis cross -->
                        <path d="M403 963V943" stroke="#0000c0" stroke-width="3"/>
                        <path d="M399 947l4-11 4 11z" fill="#0000c0"/>
                        <path d="M403 962l13-7" stroke="#00a000" stroke-width="3"/>
                        <path d="M414 952l11-1-7 8z" fill="#00a000"/>
                        <path d="M404 963l12 6" stroke="#c00000" stroke-width="3"/>
                        <path d="M414 972h10l-7-8z" fill="#c00000"/>
                    </svg>
                    <div class="activate">
                        <div class="activate-big">激活 Windows</div>
                        <div class="activate-small">转到“设置”以激活 Windows。</div>
                    </div>
                </div>
            </div>
        </main>

        <div class="vtools">
            <span class="grip-h"></span>
            <span class="vi"><svg><use href="#v-c1"/></svg></span>
            <span class="vi"><svg><use href="#v-c2"/></svg></span>
            <span class="vi"><svg><use href="#v-c3"/></svg></span>
            <span class="vi"><svg><use href="#v-c4"/></svg></span>
            <span class="vsep"></span>
            <span class="vi"><svg><use href="#v-y1"/></svg></span>
            <span class="vi"><svg><use href="#v-y2"/></svg></span>
            <span class="vi"><svg><use href="#v-y3"/></svg></span>
            <span class="vi"><svg><use href="#v-y4"/></svg></span>
            <span class="vsep"></span>
            <span class="vi"><svg><use href="#v-j1"/></svg></span>
            <span class="vi"><svg><use href="#v-j2"/></svg></span>
            <span class="vsep"></span>
            <span class="vi"><svg><use href="#v-arr"/></svg></span>
            <span class="vi"><svg><use href="#v-diag"/></svg></span>
            <span class="vbreak"></span>
            <span class="vi"><svg><use href="#v-line"/></svg></span>
            <span class="vi"><svg><use href="#v-poly"/></svg></span>
            <span class="vi"><svg><use href="#v-poly2"/></svg></span>
            <span class="vi"><svg><use href="#v-rect"/></svg></span>
            <span class="vi"><svg><use href="#v-rectn"/></svg></span>
            <span class="vsep"></span>
            <span class="vi"><svg><use href="#v-circ"/></svg></span>
            <span class="vi"><svg><use href="#v-circn"/></svg></span>
            <span class="vi"><svg><use href="#v-arc"/></svg></span>
            <span class="vi"><svg><use href="#v-arc2"/></svg></span>
            <span class="vi"><svg><use href="#v-pie"/></svg></span>
            <span class="vi"><svg><use href="#v-ell"/></svg></span>
            <span class="vsep"></span>
            <span class="vi"><svg><use href="#v-s"/></svg></span>
            <span class="vsep"></span>
            <span class="vi vi-t">T</span>
            <span class="vi"><svg><use href="#v-img"/></svg></span>
            <span class="vi"><svg><use href="#v-link"/></svg></span>
            <span class="vsep"></span>
            <span class="vi"><svg><use href="#v-dim"/></svg></span>
            <span class="vi"><svg><use href="#v-ddim"/></svg></span>
            <span class="vi"><svg><use href="#v-d3"/></svg></span>
            <span class="vi"><svg><use href="#v-d4"/></svg></span>
            <span class="vi"><svg><use href="#v-ds"/></svg></span>
            <span class="vi"><svg><use href="#v-ang"/></svg></span>
            <span class="vi"><svg><use href="#v-angd"/></svg></span>
        </div>
    </div>

    <footer class="status">
        <span class="st st-open">打开: 10.00 mm</span>
        <span class="st st-scale">图形 1:1</span>
        <span class="st st-blank"></span>
        <span class="st st-stop"><svg viewBox="0 0 14 14"><circle cx="7" cy="7" r="7" fill="#d0402a"/><path d="M3 7h8" stroke="#fff" stroke-width="2.500"/></svg></span>
    </footer>
</div>

<ul class="ctx">
    <li class="mi"><span class="mi-ic"></span><span>新建<span class="k">... (N)</span></span></li>
    <li class="mi"><span class="mi-ic"></span><span>打开<span class="k"> (O)</span></span></li>
    <li class="mi off"><span class="mi-ic"></span><span>在新窗口中打开<span class="k"> (W)</span></span></li>
    <li class="mi"><span class="mi-ic"></span><span>关闭<span class="k"> (C)</span></span></li>
    <li class="ms"></li>
    <li class="mi off"><span class="mi-ic"><svg><use href="#m-cut"/></svg></span><span>剪切</span><span class="mi-k">Ctrl+X</span></li>
    <li class="mi off"><span class="mi-ic"><svg><use href="#m-copy"/></svg></span><span>复制</span><span class="mi-k">Ctrl+C</span></li>
    <li class="mi"><span class="mi-ic"><svg><use href="#m-paste"/></svg></span><span>粘贴</span><span class="mi-k">Ctrl+V</span></li>
    <li class="ms"></li>
    <li class="mi"><span class="mi-ic"><svg><use href="#m-del"/></svg></span><span>删除<span class="k"> (L)</span></span><span class="mi-k">Delete</span></li>
    <li class="ms"></li>
    <li class="mi"><span class="mi-ic"></span><span>更新主要组件<span class="k"> (U)</span></span></li>
    <li class="mi"><span class="mi-ic"></span><span>更新部件放置<span class="k"> (D)</span></span></li>
    <li class="mi off"><span class="mi-ic"></span><span>更换部件<span class="k"> ...</span></span></li>
    <li class="mi off"><span class="mi-ic"></span><span>迁移部件</span></li>
    <li class="mi"><span class="mi-ic"></span><span>编辑图例位置<span class="k">... (T)</span></span></li>
    <li class="mi off"><span class="mi-ic"></span><span>编辑修订标记<span class="k">... (E)</span></span></li>
    <li class="mi off"><span class="mi-ic"></span><span>删除修订标记<span class="k"> (V)</span></span></li>
    <li class="ms"></li>
    <li class="mi"><span class="mi-ic"></span><span>转到(关联参考)<span class="k"> ... (F)</span></span></li>
    <li class="mi"><span class="mi-ic"></span><span>转到(全部表达类型)<span class="k">... (Y)</span></span></li>
    <li class="mi"><span class="mi-ic"></span><span>转到(图形)<span class="k"> (G)</span></span><span class="mi-k">Ctrl+J</span></li>
    <li class="mi"><span class="mi-ic"></span><span>直接激活<span class="k"> (A)</span></span></li>
    <li class="mi off"><span class="mi-ic"></span><span>取消直接激活<span class="k"> (R)</span></span></li>
    <li class="mi"><span class="mi-ic"></span><span>插入查找结果列表<span class="k"> (I)</span></span><span class="mi-k">Ctrl+I</span></li>
    <li class="ms"></li>
    <li class="mi has-sub"><span class="mi-ic"></span><span>显示<span class="k"> (S)</span></span></li>
    <li class="mi off"><span class="mi-ic"></span><span>隐藏<span class="k"> (H)</span></span></li>
    <li class="mi"><span class="mi-ic"></span><span>简化显示<span class="k"> (M)</span></span></li>
    <li class="ms"></li>
    <li class="mi"><span class="mi-ic"></span><span>预选列表</span></li>
    <li class="mi"><span class="mi-ic"></span><span>配置显示<span class="k">...</span></span></li>
    <li class="ms"></li>
    <li class="mi off"><span class="mi-ic"></span><span>生成安装面</span></li>
    <li class="mi has-sub"><span class="mi-ic"></span><span>安装面</span></li>
    <li class="mi off"><span class="mi-ic"></span><span>区域大小<span class="k"> (Z)</span></span></li>
    <li class="ms"></li>
    <li class="mi"><span class="mi-ic"><svg><use href="#m-table"/></svg></span><span>表格式编辑<span class="k"> (B)</span></span></li>
    <li class="mi"><span class="mi-ic"></span><span>属性<span class="k">... (P)</span></span></li>
    <li class="mi off"><span class="mi-ic"></span><span>属性(全局)<span class="k">...</span></span></li>
</ul>
<div class="red-mark"></div>
<div class="csdn-mark">CSDN @平行的时光线</div>
</body>
</html>
```

FILE: styles.css
```css
* {
    margin: 0;
    padding: 0;
    box-sizing: border-box;
}

html, body {
    height: 1040px;
    overflow: hidden;
}

body {
    position: relative;
    background-color: #fff;
    color: #111;
    font-family: Roboto, "Noto Sans CJK SC", sans-serif;
    font-size: 13px;
    line-height: 1;
}

.defs {
    position: absolute;
}

.k {
    font-size: 12px;
}

.app {
    display: flex;
    flex-direction: column;
    height: 1040px;
}

/* title + menu */
.titlebar {
    display: flex;
    align-items: center;
    flex: 0 0 23px;
    padding-left: 3px;
    background-color: #fff;
    border-bottom: 1px solid #f0f0f0;
}

.logo {
    width: 16px;
    height: 16px;
    margin-right: 4px;
}

.title-text {
    display: flex;
    justify-content: space-between;
    width: 392px;
}

.title-app {
    font-size: 12.4px;
}

.win-btns {
    display: flex;
    margin-left: auto;
}

.win-btn {
    display: flex;
    align-items: center;
    justify-content: center;
    width: 46px;
    height: 22px;
    border: none;
    background: none;
}

.win-btn svg {
    width: 10px;
    height: 10px;
}

.menubar {
    display: flex;
    align-items: center;
    flex: 0 0 24px;
    background-color: #fff;
    border-bottom: 1px solid #b0b0b0;
    border-right: 1px solid #b0b0b0;
}

.grip-v {
    width: 2px;
    height: 18px;
    margin: 0 2px 0 5px;
    background: repeating-linear-gradient(#bbb 0 2px, transparent 2px 4px);
}

.menu-left {
    display: flex;
    width: 362px;
    overflow: hidden;
}

.menu-item {
    flex: 0 0 auto;
    padding: 0 8px;
    line-height: 22px;
    white-space: nowrap;
}

/* toolbars */
.toolrow {
    display: flex;
    flex: 0 0 28px;
    background-color: #fff;
}

.last-row {
    border-bottom: 1px solid #b0b0b0;
}

.tb {
    display: flex;
    align-items: center;
    height: 28px;
    border-right: 1px solid #b0b0b0;
    border-bottom: 1px solid #b0b0b0;
}

.last-row .tb {
    height: 27px;
    border-bottom: none;
}

.tb-right {
    margin-left: auto;
    background-color: #f8f8f8;
    border-right: none;
    border-left: none;
    padding-right: 1px;
}

.grip {
    flex: 0 0 10px;
    height: 20px;
    margin-left: 0;
    background: repeating-linear-gradient(#bbb 0 2px, transparent 2px 4px) 4px 0 / 2px 100% no-repeat;
}

.grip-tight {
    flex-basis: 9px;
}

.grip-small {
    flex-basis: 4px;
    margin-left: 2px;
    background-position: 2px 0;
}

.ti {
    display: flex;
    align-items: center;
    justify-content: center;
    flex: 0 0 24px;
    height: 25px;
}

.ti svg {
    width: 18px;
    height: 18px;
}

.ti.on {
    background-color: #cce8ff;
    outline: 1px solid #99d1ff;
    outline-offset: -1px;
}

.gl {
    font-family: "Liberation Sans", sans-serif;
    font-size: 10px;
    font-weight: 700;
    fill: #c0532a;
}

.tsep {
    flex: 0 0 8px;
    height: 20px;
    background: linear-gradient(#a8a8a8, #a8a8a8) 2px 0 / 1px 100% no-repeat;
}

.tsep-end {
    flex-basis: 6px;
}

.fill-1 { flex: 0 0 224px; }
.fill-2 { flex: 0 0 203px; }
.fill-3 { flex: 0 0 212px; }

/* workspace */
.workspace {
    display: flex;
    flex: 1;
    min-height: 0;
}

.side {
    display: flex;
    flex-direction: column;
    flex: 0 0 305px;
    background-color: #fff;
}

.panel-head {
    flex: 0 0 23px;
    padding: 0 4px;
    line-height: 23px;
    background: linear-gradient(#a3bedb, #dbe6f1);
}

.preview-head {
    background: linear-gradient(#b8cbdf, #dfe8f1);
}

.side-tabs {
    display: flex;
    flex: 0 0 28px;
    padding-top: 3px;
    background-color: #fff;
    overflow: hidden;
}

.side-tab {
    flex: 0 0 auto;
    padding: 0 8px 0 8px;
    line-height: 25px;
    color: #888;
    background-color: #f0f0f0;
    white-space: nowrap;
}

.side-tab.active {
    margin-left: 2px;
    color: #111;
    background-color: #f7f7f7;
}

.nav-body {
    display: flex;
    flex-direction: column;
    flex: 0 0 500px;
    padding: 0 4px;
    background-color: #f0f0f0;
    border-left: 2px solid #c8c8c8;
}

.field-label {
    margin-top: 9px;
    line-height: 14px;
}

.field-two {
    margin-top: 10px;
}

.select-box {
    height: 24px;
    margin-top: 7px;
    padding-left: 4px;
    line-height: 22px;
    background-color: #e4e4e4;
    border: 1px solid #b0b0b0;
}

.input-box {
    height: 24px;
    margin-top: 7px;
    background-color: #f0f0f0;
    border: 1px solid #b8b8b8;
    border-top: 2px solid #777;
    border-left: 2px solid #999;
}

.tree {
    flex: 0 0 346px;
    margin-top: 10px;
    background-color: #fff;
    border: 1px solid #a0a0a0;
    overflow: hidden;
}

.tree-row {
    display: flex;
    align-items: center;
    height: 20px;
    padding-left: 25px;
}

.tree-row.root {
    padding-left: 5px;
}

.exp {
    position: relative;
    flex: 0 0 9px;
    height: 9px;
    background-color: #fff;
    border: 1px solid #999;
}

.exp::after {
    content: '';
    position: absolute;
    left: 1px;
    top: 3px;
    width: 5px;
    height: 1px;
    background-color: #333;
}

.dash {
    flex: 0 0 7px;
    height: 1px;
    background: repeating-linear-gradient(90deg, #999 0 1px, transparent 1px 2px);
}

.t-ic {
    flex: 0 0 16px;
    width: 16px;
    height: 16px;
    margin-right: 6px;
}

.tree-row b {
    font-weight: 700;
}

.lvl1 {
    background: repeating-linear-gradient(#999 0 1px, transparent 1px 2px) 29px 0 / 1px calc(100% - 50px) no-repeat;
}

.kids {
    margin-left: 49px;
    background: repeating-linear-gradient(#999 0 1px, transparent 1px 2px) 0 0 / 1px calc(100% - 10px) no-repeat;
}

.leaf {
    display: flex;
    align-items: center;
    height: 20px;
    padding-left: 15px;
    background: repeating-linear-gradient(90deg, #999 0 1px, transparent 1px 2px) 1px 10px / 10px 1px no-repeat;
    white-space: nowrap;
}

.leaf-box {
    flex: 0 0 10px;
    height: 13px;
    background-color: #bcbcbc;
    border: 1px solid #999;
}

.leaf-green {
    flex: 0 0 12px;
    height: 13px;
    margin: 0 5px 0 -1px;
    background-color: #e4f0dc;
    border: 1px solid #8cbf80;
}

.leaf-text {
    margin-left: 6px;
    padding: 0 3px;
    line-height: 20px;
}

.first-text {
    margin-left: 6px;
}

.sel {
    color: #fff;
    background-color: #0078d7;
}

.tree-tabs {
    display: flex;
    flex: 0 0 26px;
    background-color: #fff;
}

.tree-tab {
    flex: 0 0 auto;
    padding: 0 6px;
    margin-right: 6px;
    line-height: 24px;
    color: #999;
    border-right: 1px solid #ccc;
}

.tree-tab.active {
    margin-right: 6px;
    padding: 0 7px;
    color: #111;
    border-right: 1px solid #333;
    border-bottom: 1px solid #333;
}

.preview {
    flex: 1;
    min-height: 0;
    padding: 5px 4px 4px 5px;
    margin: 2px 7px 4px 0;
    background-color: #fff;
    border-left: 2px solid #777;
    border-top: 1px solid #999;
    border-right: 2px solid #e0e0e0;
    border-bottom: 1px solid #e0e0e0;
}

.preview-view {
    height: 100%;
    background: linear-gradient(#fff, #bbb);
}

.view {
    display: flex;
    flex-direction: column;
    flex: 1;
    min-width: 0;
}

.view-strip {
    display: flex;
    align-items: center;
    justify-content: flex-end;
    flex: 0 0 24px;
    padding-right: 8px;
    background-color: #f5f5f5;
}

.strip-arrow {
    width: 0;
    height: 0;
    border-left: 5px solid transparent;
    border-right: 5px solid transparent;
    border-top: 5px solid #000;
}

.view-frame {
    flex: 1;
    min-height: 0;
    border: 3px solid #b4cbe6;
    border-top-width: 2px;
    background-color: #fff;
    padding: 0 1px 2px 0;
}

.canvas {
    position: relative;
    height: 100%;
    border-top: 1px solid #555;
    border-left: 1px solid #707070;
    background: linear-gradient(#fff, #bbb);
}

.scene {
    display: block;
    width: 100%;
    height: 100%;
}

.activate {
    position: absolute;
    left: 1322px;
    top: 785px;
    color: #aeaeae;
    white-space: nowrap;
}

.activate-big {
    font-size: 20px;
    line-height: 28px;
    letter-spacing: 0.6px;
}

.activate-small {
    margin-top: 1px;
    font-size: 14px;
    line-height: 20px;
    letter-spacing: 1px;
}

.vtools {
    display: flex;
    flex-direction: column;
    flex: 0 0 29px;
    height: 886px;
    padding-left: 1px;
    background-color: #fff;
    border-right: 1px solid #b0b0b0;
    border-bottom: 1px solid #b0b0b0;
    overflow: hidden;
}

.grip-h {
    flex: 0 0 10px;
    margin: 0 3px;
    background: repeating-linear-gradient(90deg, #bbb 0 2px, transparent 2px 4px) 0 4px / 100% 2px no-repeat;
}

.vi {
    display: flex;
    align-items: center;
    justify-content: center;
    flex: 0 0 24px;
}

.vi svg {
    width: 18px;
    height: 18px;
}

.vi-t {
    font-family: "Liberation Serif", serif;
    font-size: 22px;
    color: #888;
}

.vsep {
    flex: 0 0 8px;
    margin: 0 4px;
    background: linear-gradient(#a0a0a0, #a0a0a0) 0 2px / 100% 1px no-repeat;
}

.vbreak {
    flex: 0 0 11px;
    background: linear-gradient(#b0b0b0, #b0b0b0) 0 1px / 100% 1px no-repeat, repeating-linear-gradient(90deg, #bbb 0 2px, transparent 2px 4px) 3px 6px / 22px 2px no-repeat;
}

.status {
    display: flex;
    align-items: center;
    flex: 0 0 22px;
    font-size: 13px;
    color: #555;
    background-color: #f0f0f0;
    border-top: 1px solid #d4d4d4;
}

.st {
    height: 100%;
    padding-left: 4px;
    line-height: 21px;
    border-left: 1px solid #c8c8c8;
}

.st-open {
    margin-left: 1413px;
    width: 219px;
}

.st-scale {
    width: 126px;
}

.st-blank {
    width: 82px;
}

.st-stop svg {
    display: block;
    width: 14px;
    height: 14px;
    margin: 5px 0 0 6px;
}

/* context menu */
.ctx {
    position: absolute;
    left: 140px;
    top: 0;
    width: 230px;
    padding: 1px 0 2px;
    list-style: none;
    background-color: #f0f0f0;
    border: 1px solid #a0a0a0;
    box-shadow: 2px 2px 3px rgba(0, 0, 0, 0.35);
}

.mi {
    position: relative;
    display: flex;
    align-items: center;
    height: 22px;
    padding-right: 12px;
    white-space: nowrap;
}

.mi.off {
    color: #8c8c8c;
}

.mi-ic {
    display: flex;
    align-items: center;
    justify-content: center;
    flex: 0 0 26px;
    margin-right: 5px;
}

.mi-ic svg {
    width: 18px;
    height: 18px;
}

.mi-k {
    margin-left: auto;
    font-size: 12px;
}

.has-sub::after {
    content: '';
    position: absolute;
    right: 4px;
    top: 6px;
    border-top: 5px solid transparent;
    border-bottom: 5px solid transparent;
    border-left: 5px solid #000;
}

.ms {
    height: 8px;
    margin-left: 25px;
    background: linear-gradient(#d4d4d4, #d4d4d4) 0 3px / 100% 1px no-repeat;
}

.red-mark {
    position: absolute;
    left: 152px;
    top: 663px;
    width: 223px;
    height: 47px;
    border: 5px solid #ee1c25;
    border-radius: 1px;
}

.csdn-mark {
    position: absolute;
    left: 1713px;
    top: 1010px;
    font-size: 20px;
    line-height: 22px;
    white-space: nowrap;
    color: rgba(110, 110, 110, 0.85);
    text-shadow: 0 0 2px #fff;
}
```
